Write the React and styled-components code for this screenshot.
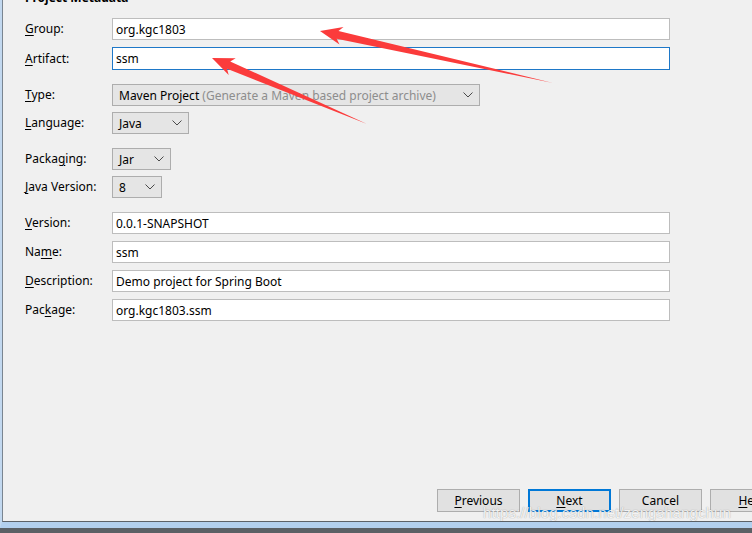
import React from 'react'
import styled, { createGlobalStyle } from 'styled-components'

const GlobalStyle = createGlobalStyle`
  html, body {
    margin: 0;
    padding: 0;
    background: #4f5458;
  }
`

const Screen = styled.div`
  position: relative;
  width: 752px;
  height: 533px;
  overflow: hidden;
  display: flex;
  flex-direction: column;
  font-family: "Noto Sans", "Liberation Sans", sans-serif;
  font-size: 12px;
  color: #000;
`

const WindowFrame = styled.div`
  flex: 1;
  display: flex;
  border-left: 2px solid #c2d8ef;
  border-bottom: 6px solid #b3d0ee;
  min-height: 0;
`

const Dialog = styled.div`
  flex: 1;
  display: flex;
  flex-direction: column;
  background: #f0f0f0;
  border-left: 1px solid #7a8590;
  border-bottom: 1px solid #5d6268;
  padding-left: 22px;
  min-width: 0;
`

const Taskbar = styled.div`
  height: 5px;
  background: #5b6065;
`

const Heading = styled.div`
  margin-top: -10px;
  height: 16px;
  line-height: 16px;
  font-weight: bold;
  font-size: 12px;
`

const Form = styled.div`
  display: flex;
  flex-direction: column;
  gap: 14px;
  margin-top: 12px;
`

const Section = styled.div`
  display: flex;
  flex-direction: column;
  gap: ${p => p.$gap}px;
`

const Row = styled.div`
  display: grid;
  grid-template-columns: 87px auto;
  align-items: center;
`

const Label = styled.span`
  line-height: 16px;
  white-space: nowrap;
`

const Key = styled.span`
  text-decoration: underline;
  text-underline-offset: 2px;
`

const TextBox = styled.div`
  box-sizing: border-box;
  width: 558px;
  height: ${p => (p.$tall ? 23 : 22)}px;
  background: #fff;
  border: 1px solid ${p => (p.$focused ? '#1e78c8' : '#bdbdbd')};
  padding: 0 3px;
  display: flex;
  align-items: center;
  white-space: nowrap;
`

const Select = styled.div`
  box-sizing: border-box;
  width: ${p => p.$width}px;
  height: 22px;
  background: #e5e5e5;
  border: 1px solid #adadad;
  padding: 0 6px;
  display: flex;
  align-items: center;
  justify-content: space-between;
  white-space: nowrap;
`

const Hint = styled.span`
  color: #8d8d8d;
`

const Spacer = styled.div`
  flex: 1;
`

const ButtonBar = styled.div`
  display: flex;
  gap: 8px;
  padding-left: 412px;
  padding-bottom: 9px;
`

const Button = styled.div`
  flex: none;
  box-sizing: border-box;
  width: 83px;
  height: 23px;
  padding-bottom: 1px;
  background: #e1e1e1;
  border: ${p => (p.$primary ? '2px solid #0078d7' : '1px solid #adadad')};
  display: flex;
  align-items: center;
  justify-content: center;
  white-space: nowrap;
`

const Watermark = styled.div`
  position: absolute;
  left: 483px;
  top: 504px;
  font-family: "Liberation Sans", Arial, sans-serif;
  font-size: 15px;
  letter-spacing: 0.1px;
  color: rgba(255, 255, 255, 0.88);
  text-shadow: 0 0 1px rgba(80, 80, 80, 0.6);
  pointer-events: none;
  white-space: nowrap;
`

const ArrowLayer = styled.svg`
  position: absolute;
  left: 0;
  top: 0;
  pointer-events: none;
`

function Chevron() {
  return (
    <svg width="10" height="6" viewBox="0 0 10 6">
      <polyline points="0.5,0.5 5,5 9.5,0.5" fill="none" stroke="#4a4a4a" strokeWidth="1" />
    </svg>
  )
}

function Field({ label, children }) {
  return (
    <Row>
      <Label>{label}</Label>
      {children}
    </Row>
  )
}

export default function App() {
  return (
    <Screen>
      <GlobalStyle />
      <WindowFrame>
        <Dialog>
          <Heading>Project Metadata</Heading>
          <Form>
            <Section $gap={7}>
              <Field label={<><Key>G</Key>roup:</>}>
                <TextBox>org.kgc1803</TextBox>
              </Field>
              <Field label={<><Key>A</Key>rtifact:</>}>
                <TextBox $focused $tall>ssm</TextBox>
              </Field>
            </Section>
            <Section $gap={6}>
              <Field label={<><Key>T</Key>ype:</>}>
                <Select $width={368}>
                  <span>
                    Maven Project <Hint>(Generate a Maven based project archive)</Hint>
                  </span>
                  <Chevron />
                </Select>
              </Field>
              <Field label={<><Key>L</Key>anguage:</>}>
                <Select $width={77}>
                  <span>Java</span>
                  <Chevron />
                </Select>
              </Field>
            </Section>
            <Section $gap={6}>
              <Field label={<>Packa<Key>g</Key>ing:</>}>
                <Select $width={59}>
                  <span>Jar</span>
                  <Chevron />
                </Select>
              </Field>
              <Field label={<><Key>J</Key>ava Version:</>}>
                <Select $width={50}>
                  <span>8</span>
                  <Chevron />
                </Select>
              </Field>
            </Section>
            <Section $gap={7}>
              <Field label={<><Key>V</Key>ersion:</>}>
                <TextBox>0.0.1-SNAPSHOT</TextBox>
              </Field>
              <Field label={<>Na<Key>m</Key>e:</>}>
                <TextBox>ssm</TextBox>
              </Field>
              <Field label={<><Key>D</Key>escription:</>}>
                <TextBox>Demo project for Spring Boot</TextBox>
              </Field>
              <Field label={<>Pac<Key>k</Key>age:</>}>
                <TextBox>org.kgc1803.ssm</TextBox>
              </Field>
            </Section>
          </Form>
          <Spacer />
          <ButtonBar>
            <Button><span><Key>P</Key>revious</span></Button>
            <Button $primary><span><Key>N</Key>ext</span></Button>
            <Button>Cancel</Button>
            <Button><span><Key>H</Key>elp</span></Button>
          </ButtonBar>
        </Dialog>
      </WindowFrame>
      <Taskbar />
      <ArrowLayer width="752" height="533" viewBox="0 0 752 533">
        <polygon
          points="320,31 343.5,27 338.5,31 553,83 336.7,38.8 339.5,44.6"
          fill="#fb3b3b"
        />
        <polygon
          points="212,58 235.7,58.3 230.2,61.4 367,124 227,68.8 228.7,74.9"
          fill="#fb3b3b"
        />
      </ArrowLayer>
      <Watermark>https://blog.csdn.net/zengshangchun</Watermark>
    </Screen>
  )
}
